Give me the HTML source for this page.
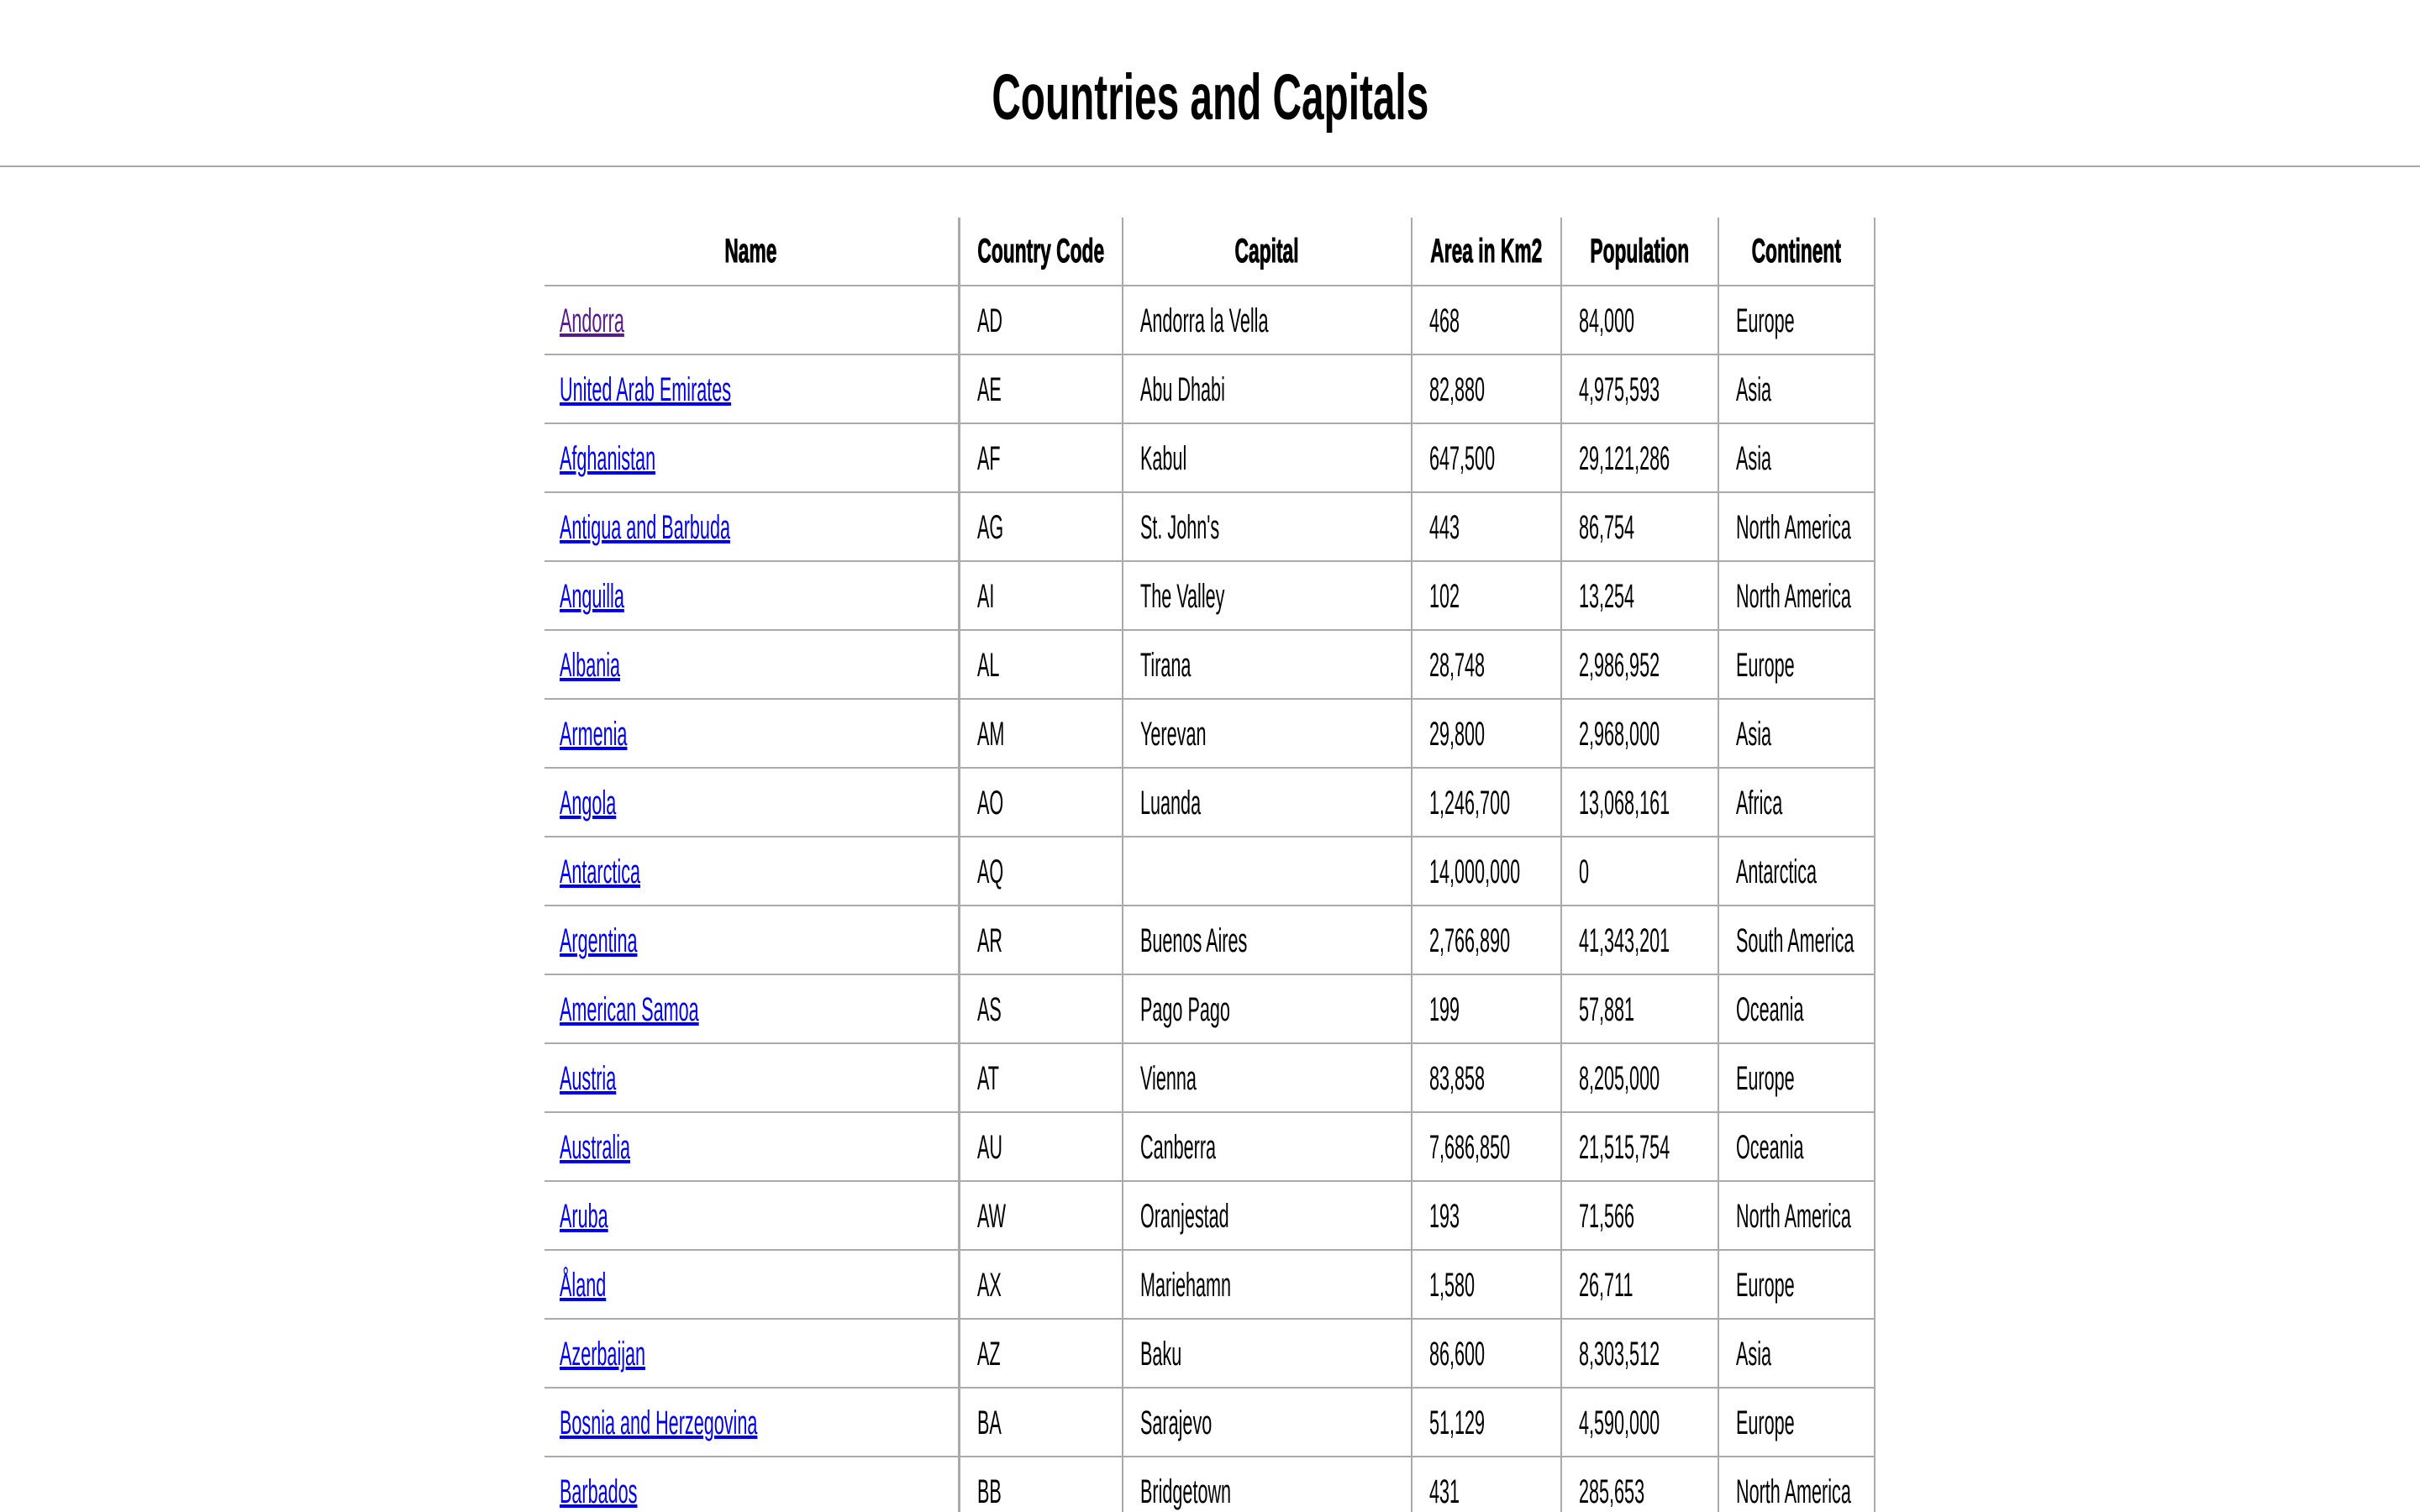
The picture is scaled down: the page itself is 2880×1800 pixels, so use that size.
<!DOCTYPE html>
<html><head><meta charset="utf-8"><style>
html,body{margin:0;padding:0;background:#fff;width:2880px;height:1800px;overflow:hidden;font-family:"Liberation Sans",sans-serif;}
#wrap{position:relative;width:2880px;height:1800px;overflow:hidden;}
h1{margin:0;position:absolute;top:70px;left:0;width:2880px;text-align:center;font-size:77px;line-height:92px;font-weight:bold;}
h1 span{display:inline-block;transform:scaleX(.62);}
.hr{position:absolute;top:197px;left:0;width:2880px;height:2px;background:#a8a8a8;}
table{position:absolute;top:259px;left:648px;border-collapse:separate;border-spacing:0;table-layout:fixed;width:1584px;}
td,th{border-right:2px solid #aaa;border-bottom:2px solid #aaa;height:78px;padding:2px 20px 0;line-height:78px;white-space:nowrap;overflow:visible;font-size:40px;text-align:left;}
td:first-child{padding-left:18px;}
th{font-weight:bold;padding:0;height:80px;line-height:80px;}
td:first-child,th:first-child{border-right-width:3px;}
.c{width:185%;transform:scaleX(.54);transform-origin:0 0;}
th .c{width:175%;transform:scaleX(.57);text-align:center;-webkit-text-stroke:1px #000;}
a{color:#0000ee;text-decoration:underline;}
a.v{color:#551a8b;}
</style></head><body><div id="wrap">
<h1><span>Countries and Capitals</span></h1>
<div class="hr"></div>
<table>
<colgroup><col style="width:495px"><col style="width:194px"><col style="width:344px"><col style="width:178px"><col style="width:187px"><col style="width:186px"></colgroup>
<tr><th><div class="c">Name</div></th><th><div class="c">Country Code</div></th><th><div class="c">Capital</div></th><th><div class="c">Area in Km2</div></th><th><div class="c">Population</div></th><th><div class="c">Continent</div></th></tr>
<tr><td><div class="c"><a class="v">Andorra</a></div></td><td><div class="c">AD</div></td><td><div class="c">Andorra la Vella</div></td><td><div class="c">468</div></td><td><div class="c">84,000</div></td><td><div class="c">Europe</div></td></tr>
<tr><td><div class="c"><a>United Arab Emirates</a></div></td><td><div class="c">AE</div></td><td><div class="c">Abu Dhabi</div></td><td><div class="c">82,880</div></td><td><div class="c">4,975,593</div></td><td><div class="c">Asia</div></td></tr>
<tr><td><div class="c"><a>Afghanistan</a></div></td><td><div class="c">AF</div></td><td><div class="c">Kabul</div></td><td><div class="c">647,500</div></td><td><div class="c">29,121,286</div></td><td><div class="c">Asia</div></td></tr>
<tr><td><div class="c"><a>Antigua and Barbuda</a></div></td><td><div class="c">AG</div></td><td><div class="c">St. John's</div></td><td><div class="c">443</div></td><td><div class="c">86,754</div></td><td><div class="c">North America</div></td></tr>
<tr><td><div class="c"><a>Anguilla</a></div></td><td><div class="c">AI</div></td><td><div class="c">The Valley</div></td><td><div class="c">102</div></td><td><div class="c">13,254</div></td><td><div class="c">North America</div></td></tr>
<tr><td><div class="c"><a>Albania</a></div></td><td><div class="c">AL</div></td><td><div class="c">Tirana</div></td><td><div class="c">28,748</div></td><td><div class="c">2,986,952</div></td><td><div class="c">Europe</div></td></tr>
<tr><td><div class="c"><a>Armenia</a></div></td><td><div class="c">AM</div></td><td><div class="c">Yerevan</div></td><td><div class="c">29,800</div></td><td><div class="c">2,968,000</div></td><td><div class="c">Asia</div></td></tr>
<tr><td><div class="c"><a>Angola</a></div></td><td><div class="c">AO</div></td><td><div class="c">Luanda</div></td><td><div class="c">1,246,700</div></td><td><div class="c">13,068,161</div></td><td><div class="c">Africa</div></td></tr>
<tr><td><div class="c"><a>Antarctica</a></div></td><td><div class="c">AQ</div></td><td><div class="c"></div></td><td><div class="c">14,000,000</div></td><td><div class="c">0</div></td><td><div class="c">Antarctica</div></td></tr>
<tr><td><div class="c"><a>Argentina</a></div></td><td><div class="c">AR</div></td><td><div class="c">Buenos Aires</div></td><td><div class="c">2,766,890</div></td><td><div class="c">41,343,201</div></td><td><div class="c">South America</div></td></tr>
<tr><td><div class="c"><a>American Samoa</a></div></td><td><div class="c">AS</div></td><td><div class="c">Pago Pago</div></td><td><div class="c">199</div></td><td><div class="c">57,881</div></td><td><div class="c">Oceania</div></td></tr>
<tr><td><div class="c"><a>Austria</a></div></td><td><div class="c">AT</div></td><td><div class="c">Vienna</div></td><td><div class="c">83,858</div></td><td><div class="c">8,205,000</div></td><td><div class="c">Europe</div></td></tr>
<tr><td><div class="c"><a>Australia</a></div></td><td><div class="c">AU</div></td><td><div class="c">Canberra</div></td><td><div class="c">7,686,850</div></td><td><div class="c">21,515,754</div></td><td><div class="c">Oceania</div></td></tr>
<tr><td><div class="c"><a>Aruba</a></div></td><td><div class="c">AW</div></td><td><div class="c">Oranjestad</div></td><td><div class="c">193</div></td><td><div class="c">71,566</div></td><td><div class="c">North America</div></td></tr>
<tr><td><div class="c"><a>Åland</a></div></td><td><div class="c">AX</div></td><td><div class="c">Mariehamn</div></td><td><div class="c">1,580</div></td><td><div class="c">26,711</div></td><td><div class="c">Europe</div></td></tr>
<tr><td><div class="c"><a>Azerbaijan</a></div></td><td><div class="c">AZ</div></td><td><div class="c">Baku</div></td><td><div class="c">86,600</div></td><td><div class="c">8,303,512</div></td><td><div class="c">Asia</div></td></tr>
<tr><td><div class="c"><a>Bosnia and Herzegovina</a></div></td><td><div class="c">BA</div></td><td><div class="c">Sarajevo</div></td><td><div class="c">51,129</div></td><td><div class="c">4,590,000</div></td><td><div class="c">Europe</div></td></tr>
<tr><td><div class="c"><a>Barbados</a></div></td><td><div class="c">BB</div></td><td><div class="c">Bridgetown</div></td><td><div class="c">431</div></td><td><div class="c">285,653</div></td><td><div class="c">North America</div></td></tr>
</table>
</div></body></html>
